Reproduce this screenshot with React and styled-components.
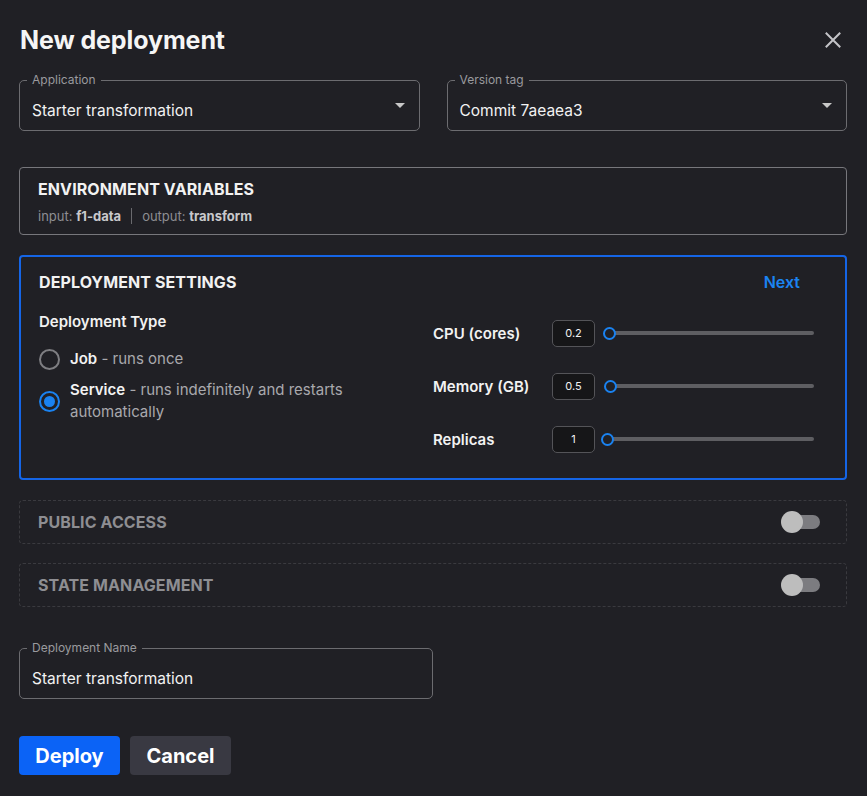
import React from "react";
import styled, { createGlobalStyle } from "styled-components";

const Global = createGlobalStyle`
  html, body { margin: 0; padding: 0; background: #202025; }
  body { font-family: Inter, "Noto Sans", "Liberation Sans", sans-serif; color: #f2f2f2; }
  * { box-sizing: border-box; }
`;

const Page = styled.div`
  width: 867px;
  min-height: 796px;
  padding: 16px 20px 0 19px;
  display: flex;
  flex-direction: column;
`;

const Header = styled.div`
  height: 48px;
  display: flex;
  align-items: center;
  justify-content: space-between;
  padding-left: 1px;
`;

const Title = styled.h1`
  margin: 0;
  font-size: 25px;
  font-weight: 700;
  letter-spacing: -0.1px;
  color: #f5f5f5;
`;

const Close = styled.button`
  background: none;
  border: none;
  padding: 0;
  width: 24px;
  height: 24px;
  display: flex;
  align-items: center;
  justify-content: center;
  margin-right: 2px;
  cursor: pointer;
`;

const Row = styled.div`
  display: grid;
  grid-template-columns: 1fr 1fr;
  gap: 27px;
  margin-top: 16px;
`;

const Field = styled.div`
  position: relative;
  height: 51px;
  width: ${(p) => p.$width || "auto"};
  border: 1px solid #6c6c70;
  border-radius: 5px;
  display: flex;
  align-items: center;
  padding: 9px 12px 0 12px;
  margin-top: ${(p) => p.$mt || 0}px;
`;

const FieldLabel = styled.span`
  position: absolute;
  top: -8px;
  left: 7px;
  padding: 0 5px;
  background: #202025;
  font-size: 12px;
  line-height: 14px;
  color: #9a9a9e;
`;

const FieldValue = styled.span`
  flex: 1;
  font-size: 15.5px;
  color: #f2f2f2;
`;

const Caret = styled.span`
  width: 0;
  height: 0;
  border-left: 5px solid transparent;
  border-right: 5px solid transparent;
  border-top: 5px solid #c8c8c8;
  margin-right: 2px;
  margin-top: -9px;
`;

const EnvBox = styled.div`
  margin-top: 36px;
  height: 68px;
  border: 1px solid #77777c;
  border-radius: 4px;
  padding: 11px 18px 0;
  display: flex;
  flex-direction: column;
  gap: 9px;
`;

const SectionTitle = styled.div`
  font-size: 16px;
  font-weight: 700;
  line-height: 20px;
  letter-spacing: 0.1px;
  color: ${(p) => (p.$muted ? "#8e8e92" : "#f2f2f2")};
  text-transform: uppercase;
`;

const EnvMeta = styled.div`
  display: flex;
  align-items: center;
  font-size: 13px;
  line-height: 16px;
  color: #8e8e92;
`;

const Strong = styled.b`
  color: #c9c9cc;
  font-weight: 700;
`;

const Divider = styled.span`
  width: 1px;
  height: 16px;
  background: #6a6a6e;
  margin: 0 10px;
`;

const Panel = styled.div`
  margin-top: 20px;
  border: 2px solid #1565e6;
  border-radius: 4px;
  padding: 15px 0 19px;
  width: 828px;
`;

const PanelHeader = styled.div`
  display: flex;
  justify-content: space-between;
  align-items: center;
  padding: 0 45px 0 18px;
`;

const NextLink = styled.button`
  background: none;
  border: none;
  padding: 0;
  font-family: inherit;
  font-size: 16px;
  font-weight: 600;
  color: #1b84f2;
  cursor: pointer;
`;

const Columns = styled.div`
  display: grid;
  grid-template-columns: 1fr 1fr;
  gap: 14px;
  margin-top: 19px;
  padding: 0 32px 0 18px;
`;

const LeftCol = styled.div`
  display: flex;
  flex-direction: column;
`;

const SubTitle = styled.div`
  font-size: 15px;
  font-weight: 600;
  line-height: 22px;
  color: #f2f2f2;
`;

const RadioList = styled.div`
  display: flex;
  flex-direction: column;
  gap: 9px;
  margin-top: 15px;
`;

const RadioRow = styled.div`
  display: flex;
  align-items: center;
  gap: 10px;
  font-size: 15px;
  line-height: 22px;
  color: #a9a9ad;
`;

const RadioDot = styled.span`
  flex: none;
  width: 21px;
  height: 21px;
  border-radius: 50%;
  border: 2px solid ${(p) => (p.$on ? "#1a82f0" : "#7e7e82")};
  display: flex;
  align-items: center;
  justify-content: center;
  &::after {
    content: "";
    width: 11px;
    height: 11px;
    border-radius: 50%;
    background: ${(p) => (p.$on ? "#1a82f0" : "transparent")};
  }
`;

const RadioText = styled.p`
  margin: 0;
`;

const RadioName = styled.strong`
  color: #f2f2f2;
  font-weight: 600;
`;

const RightCol = styled.div`
  display: flex;
  flex-direction: column;
  gap: 13px;
  padding-top: 2px;
`;

const SliderRow = styled.div`
  height: 40px;
  display: grid;
  grid-template-columns: 110px 43px 1fr;
  align-items: center;
  column-gap: 9px;
`;

const SliderLabel = styled.span`
  font-size: 15px;
  font-weight: 600;
  color: #f2f2f2;
`;

const NumBox = styled.div`
  width: 43px;
  height: 27px;
  border: 1px solid #545458;
  border-radius: 5px;
  background: #161618;
  display: flex;
  align-items: center;
  justify-content: center;
  font-size: 11px;
  color: #f2f2f2;
`;

const Track = styled.div`
  position: relative;
  height: 4px;
  border-radius: 2px;
  background: #5e5e62;
  margin-left: ${(p) => p.$offset || 0}px;
  margin-right: -1px;
`;

const Thumb = styled.span`
  position: absolute;
  left: -3px;
  top: 50%;
  width: 13px;
  height: 13px;
  margin-top: -6.5px;
  border-radius: 50%;
  border: 2px solid #1a82f0;
  background: #202025;
`;

const ToggleBox = styled.div`
  margin-top: ${(p) => p.$mt}px;
  height: 44px;
  border: 1px dashed #3a3a3f;
  border-radius: 4px;
  display: flex;
  align-items: center;
  justify-content: space-between;
  padding: 0 26px 0 18px;
`;

const Switch = styled.span`
  position: relative;
  width: 39px;
  height: 22px;
  display: flex;
  align-items: center;
  justify-content: flex-end;
`;

const SwitchTrack = styled.span`
  width: 34px;
  height: 14px;
  border-radius: 7px;
  background: #7c7c80;
`;

const SwitchThumb = styled.span`
  position: absolute;
  left: 0;
  top: 0;
  width: 22px;
  height: 22px;
  border-radius: 50%;
  background: #bdbdbd;
`;

const Buttons = styled.div`
  display: flex;
  gap: 10px;
  margin-top: 37px;
`;

const Btn = styled.button`
  width: 101px;
  height: 39px;
  border: none;
  border-radius: 4px;
  font-family: inherit;
  font-size: 20px;
  font-weight: 700;
  color: #ffffff;
  background: ${(p) => (p.$primary ? "#0b63f6" : "#393942")};
  cursor: pointer;
`;

const sliders = [
  { label: "CPU (cores)", value: "0.2", offset: 2 },
  { label: "Memory (GB)", value: "0.5", offset: 3 },
  { label: "Replicas", value: "1", offset: 0 },
];

export default function App() {
  return (
    <>
      <Global />
      <Page>
        <Header>
          <Title>New deployment</Title>
          <Close aria-label="Close">
            <svg width="16" height="16" viewBox="0 0 16 16">
              <path d="M1.5 1.5 L14.5 14.5 M14.5 1.5 L1.5 14.5" stroke="#c4c4c8" strokeWidth="2" strokeLinecap="square" />
            </svg>
          </Close>
        </Header>

        <Row>
          <Field>
            <FieldLabel>Application</FieldLabel>
            <FieldValue>Starter transformation</FieldValue>
            <Caret />
          </Field>
          <Field>
            <FieldLabel>Version tag</FieldLabel>
            <FieldValue>Commit 7aeaea3</FieldValue>
            <Caret />
          </Field>
        </Row>

        <EnvBox>
          <SectionTitle>Environment variables</SectionTitle>
          <EnvMeta>
            input:&nbsp;<Strong>f1-data</Strong>
            <Divider />
            output:&nbsp;<Strong>transform</Strong>
          </EnvMeta>
        </EnvBox>

        <Panel>
          <PanelHeader>
            <SectionTitle>Deployment settings</SectionTitle>
            <NextLink>Next</NextLink>
          </PanelHeader>
          <Columns>
            <LeftCol>
              <SubTitle>Deployment Type</SubTitle>
              <RadioList>
                <RadioRow>
                  <RadioDot />
                  <RadioText>
                    <RadioName>Job</RadioName> - runs once
                  </RadioText>
                </RadioRow>
                <RadioRow>
                  <RadioDot $on />
                  <RadioText>
                    <RadioName>Service</RadioName> - runs indefinitely and restarts automatically
                  </RadioText>
                </RadioRow>
              </RadioList>
            </LeftCol>
            <RightCol>
              {sliders.map((s) => (
                <SliderRow key={s.label}>
                  <SliderLabel>{s.label}</SliderLabel>
                  <NumBox>{s.value}</NumBox>
                  <Track $offset={s.offset}>
                    <Thumb />
                  </Track>
                </SliderRow>
              ))}
            </RightCol>
          </Columns>
        </Panel>

        <ToggleBox $mt={20}>
          <SectionTitle $muted>Public access</SectionTitle>
          <Switch>
            <SwitchTrack />
            <SwitchThumb />
          </Switch>
        </ToggleBox>
        <ToggleBox $mt={19}>
          <SectionTitle $muted>State management</SectionTitle>
          <Switch>
            <SwitchTrack />
            <SwitchThumb />
          </Switch>
        </ToggleBox>

        <Field $width="414px" $mt={41}>
          <FieldLabel>Deployment Name</FieldLabel>
          <FieldValue>Starter transformation</FieldValue>
        </Field>

        <Buttons>
          <Btn $primary>Deploy</Btn>
          <Btn>Cancel</Btn>
        </Buttons>
      </Page>
    </>
  );
}
